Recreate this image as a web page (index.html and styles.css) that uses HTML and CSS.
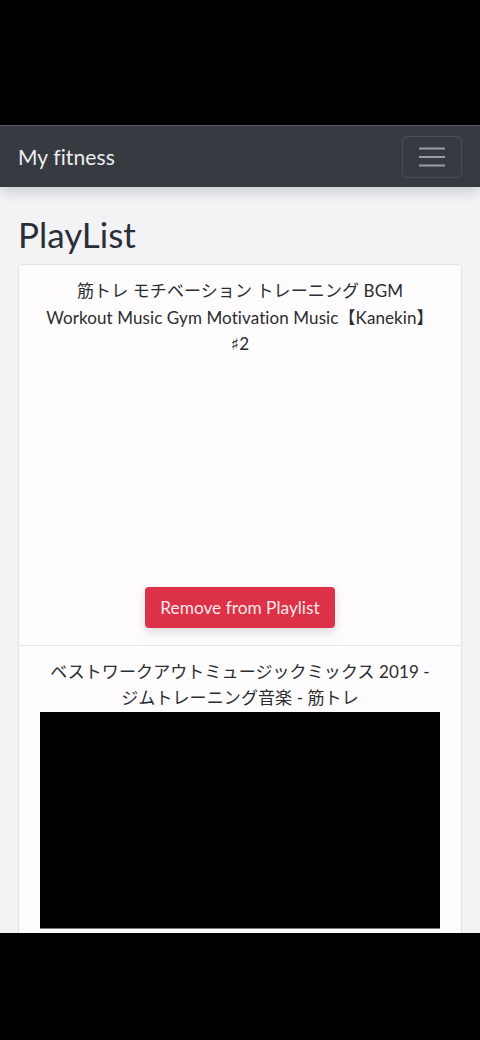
FILE: index.html
```html
<!DOCTYPE html>
<html lang="ja">
<head>
<meta charset="utf-8">
<link rel="stylesheet" href="styles.css">
</head>
<body>
<div class="screen">
  <nav class="navbar">
    <span class="brand">My fitness</span>
    <button class="toggler" type="button" aria-label="menu">
      <svg width="30" height="30" viewBox="0 0 30 30"><path d="M2 6.5h26M2 15h26M2 23.5h26" stroke="#9b9ea3" stroke-width="2"/></svg>
    </button>
  </nav>
  <main class="content">
    <h1 class="heading">PlayList</h1>
    <div class="cards">
      <section class="card">
        <p class="title">筋トレ モチベーション トレーニング BGM Workout Music Gym Motivation Music【Kanekin】<span class="sharp">♯</span>2</p>
        <div class="video blank"></div>
        <button class="btn-remove" type="button">Remove from Playlist</button>
      </section>
      <section class="card">
        <p class="title">ベストワークアウトミュージックミックス 2019 - ジムトレーニング音楽 - 筋トレ</p>
        <div class="video dark"></div>
      </section>
    </div>
  </main>
</div>
</body>
</html>
```
FILE: styles.css
```css
* { box-sizing: border-box; }
html, body { margin: 0; padding: 0; background: #000; }
body { font-family: Lato, "Noto Sans CJK JP", sans-serif; }
.screen {
  margin-top: 125px;
  height: 808px;
  overflow: hidden;
  background: #f3f3f5;
  border-top: 1px solid #56585c;
  display: flex;
  flex-direction: column;
}
.navbar {
  flex: none;
  height: 61px;
  background: #373a40;
  display: flex;
  align-items: center;
  justify-content: space-between;
  padding: 0 18px;
  box-shadow: 0 4px 12px rgba(120,125,140,0.35);
  position: relative;
  z-index: 1;
}
.brand { color: #eceef0; font-size: 21px; letter-spacing: 0.1px; }
.toggler {
  width: 60px; height: 42px;
  border: 1px solid rgba(255,255,255,0.1);
  border-radius: 5px;
  background: transparent;
  display: flex; align-items: center; justify-content: center;
  padding: 0;
}
.content { padding: 0 18px; }
.heading {
  margin: 26px 0 9px;
  font-weight: 400;
  font-size: 35px;
  line-height: 42px;
  color: #2a2f37;
}
.cards {
  background: #fefcfd;
  border: 1px solid #e3e3e6;
  border-radius: 4px;
}
.card {
  padding: 13px 21px 17px;
  display: flex;
  flex-direction: column;
  align-items: center;
}
.card + .card { border-top: 1px solid #e6e6e8; }
.title {
  margin: 0;
  max-width: 390px;
  text-align: center;
  font-size: 17px;
  letter-spacing: 0.1px;
  line-height: 26.5px;
  color: #2a2c30;
}
.sharp { font-family: "DejaVu Sans", sans-serif; font-size: 17px; line-height: 0; }
.video { width: 400px; height: 217px; }
.video.dark { background: #000; border-bottom: 1px solid #7a7a7c; }
.btn-remove {
  margin-top: 12px;
  width: 190px; height: 41px;
  background: #dc3146;
  color: #fbe9ec;
  border: none;
  border-radius: 4px;
  font-family: Lato, sans-serif;
  font-size: 17.3px;
  box-shadow: 0 4px 10px rgba(180,180,190,0.45);
}
```
